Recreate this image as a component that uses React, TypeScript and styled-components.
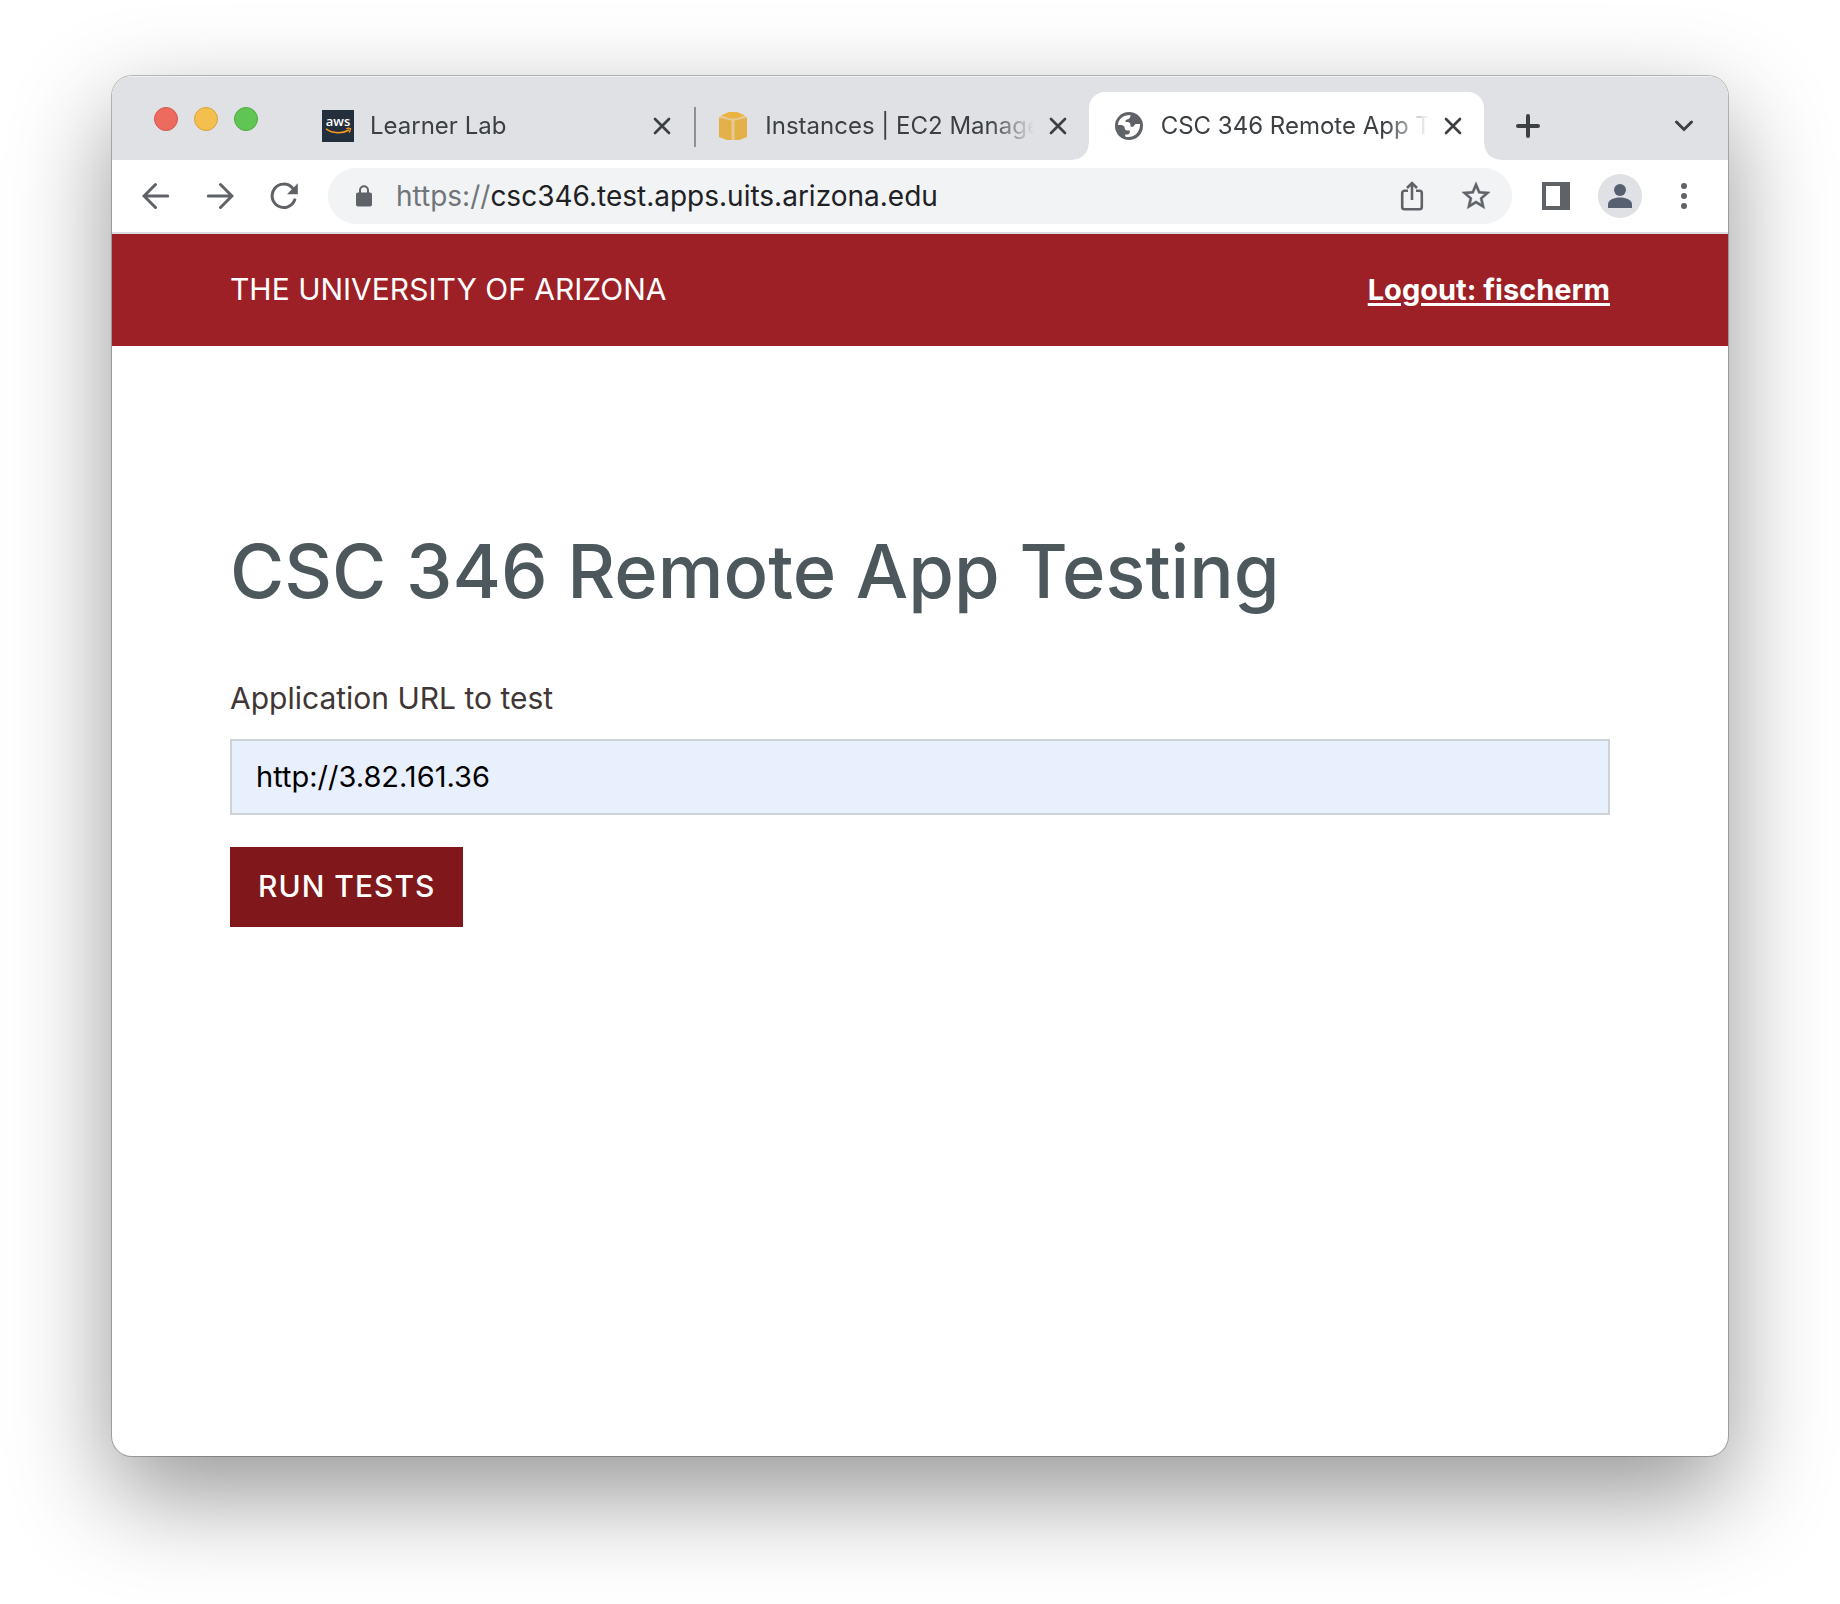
import React, { useState } from 'react';
import styled, { createGlobalStyle, css } from 'styled-components';

const color = {
  strip: '#dfe1e5',
  field: '#f1f3f4',
  icon: '#5f6368',
  ink: '#3c4043',
  red: '#9c2026',
  darkRed: '#7f171b',
};

const GlobalStyle = createGlobalStyle`
  *, *::before, *::after { box-sizing: border-box; }
  body { margin: 0; background: #fff; font-family: Inter, "Liberation Sans", sans-serif; }
  button, input { font: inherit; }
`;

const Desktop = styled.div`
  display: flex;
  min-height: 100vh;
  padding: 76px 112px 148px;
`;

const Window = styled.div`
  display: flex;
  flex-direction: column;
  flex: 1;
  min-width: 0;
  border-radius: 20px;
  overflow: hidden;
  background: #fff;
  box-shadow: 0 0 0 1px rgba(0, 0, 0, 0.24), 0 38px 100px rgba(0, 0, 0, 0.42);
`;

/* Tab strip */

const TabStrip = styled.div`
  display: flex;
  height: 84px;
  padding: 0 12px 0 42px;
  background: ${color.strip};
  box-shadow: inset 0 1px 0 #f1f2f4;
`;

const WindowControls = styled.div`
  display: flex;
  gap: 16px;
  padding-top: 31px;
  margin-right: 40px;
`;

const Light = styled.button<{ $fill: string; $edge: string }>`
  width: 24px;
  height: 24px;
  padding: 0;
  border: 1px solid ${(p) => p.$edge};
  border-radius: 50%;
  background: ${(p) => p.$fill};
`;

const Tabs = styled.div`
  display: flex;
  flex: 1;
  max-width: 1186px;
  min-width: 0;
  padding-top: 16px;
`;

const foot = css`
  content: '';
  position: absolute;
  bottom: 0;
  width: 16px;
  height: 16px;
`;

const Tab = styled.div<{ $active?: boolean; $divided?: boolean }>`
  position: relative;
  display: flex;
  align-items: center;
  flex: 1 1 0;
  min-width: 0;
  padding: 0 15px 0 24px;
  border-radius: 16px 16px 0 0;
  background: ${(p) => (p.$active ? '#fff' : 'transparent')};

  ${(p) =>
    p.$divided &&
    css`
      &::before {
        content: '';
        position: absolute;
        left: 1px;
        top: 15px;
        width: 2px;
        height: 40px;
        background: #8d9095;
      }
    `}

  ${(p) =>
    p.$active &&
    css`
      &::before {
        ${foot}
        left: -16px;
        background: radial-gradient(circle at 0 0, transparent 15px, #fff 16px);
      }
      &::after {
        ${foot}
        right: -16px;
        background: radial-gradient(circle at 100% 0, transparent 15px, #fff 16px);
      }
    `}
`;

const Favicon = styled.span`
  display: grid;
  place-items: center;
  flex: none;
  width: 32px;
  height: 32px;
  margin-right: 16px;
`;

const TabTitle = styled.span`
  flex: 1;
  min-width: 0;
  overflow: hidden;
  white-space: nowrap;
  font-size: 24px;
  line-height: 32px;
  color: ${color.ink};
  mask-image: linear-gradient(to left, transparent, #000 44px);
`;

const Plain = styled.button`
  display: grid;
  place-items: center;
  flex: none;
  padding: 0;
  border: 0;
  background: none;
`;

const CloseButton = styled(Plain)`
  width: 32px;
  height: 32px;
  margin-left: 8px;
`;

const StripButton = styled(Plain)`
  width: 64px;
  margin: 16px 0 0 12px;

  &:last-child {
    margin-left: auto;
  }
`;

/* Toolbar */

const Toolbar = styled.div`
  display: flex;
  align-items: center;
  height: 74px;
  padding: 0 12px;
  border-bottom: 2px solid #dadce0;
`;

const ToolButton = styled(Plain)`
  width: 64px;
  height: 56px;
`;

const Omnibox = styled.div`
  display: flex;
  align-items: center;
  flex: 1;
  min-width: 0;
  height: 56px;
  margin: 0 12px;
  padding: 0 4px 0 28px;
  border-radius: 28px;
  background: ${color.field};
  font-size: 28px;
  line-height: 40px;
`;

const Scheme = styled.label`
  margin-left: 24px;
  color: #70757a;
`;

const Address = styled.input`
  flex: 1;
  min-width: 0;
  height: 40px;
  padding: 0;
  border: 0;
  outline: 0;
  background: transparent;
  color: #202124;
`;

const Avatar = styled.span`
  display: grid;
  place-items: center;
  width: 44px;
  height: 44px;
  border-radius: 50%;
  background: ${color.strip};
`;

/* Page */

const Banner = styled.header`
  display: flex;
  align-items: center;
  justify-content: space-between;
  height: 112px;
  padding: 0 118px 2px;
  background: ${color.red};
  color: #fff;
  font-size: 30px;
`;

const LogoutLink = styled.a`
  color: inherit;
  font-size: 29px;
  font-weight: 700;
  text-decoration-thickness: 3px;
  text-underline-offset: 3px;
`;

const Main = styled.main`
  flex: 1;
  padding: 180px 118px 80px;
`;

const Heading = styled.h1`
  margin: 0 0 58px;
  font-size: 74px;
  font-weight: 500;
  line-height: 90px;
  color: #4c585c;
`;

const Form = styled.form`
  display: flex;
  flex-direction: column;
  align-items: flex-start;
`;

const Label = styled.label`
  margin-bottom: 17px;
  font-size: 30px;
  line-height: 48px;
  color: #403635;
`;

const UrlInput = styled.input`
  width: 100%;
  height: 76px;
  padding: 0 24px 2px;
  border: 2px solid #ccd2d8;
  border-radius: 0;
  background: #e8effd;
  color: #000;
  font-size: 29px;
`;

const RunButton = styled.button`
  height: 80px;
  margin-top: 32px;
  padding: 0 28px 2px;
  border: 0;
  background: ${color.darkRed};
  color: #fff;
  font-size: 30px;
  font-weight: 500;
  letter-spacing: 1px;
`;

/* Icons */

const AwsIcon = () => (
  <svg width="32" height="32" viewBox="0 0 32 32" aria-hidden="true">
    <rect width="32" height="32" fill="#242f3e" />
    <text x="16" y="16" textAnchor="middle" fill="#fff" fontFamily="Open Sans, sans-serif" fontWeight="600" fontSize="13">
      aws
    </text>
    <path d="M4.500 19.200c6 4.400 15.500 4.700 22 1" fill="none" stroke="#f59a1b" strokeWidth="1.600" strokeLinecap="round" />
    <path d="M24.300 18.600c1.600-.5 3-.5 4.200-.1 0 1.500-.5 2.900-1.500 4" fill="none" stroke="#f59a1b" strokeWidth="1.300" />
  </svg>
);

const BoxIcon = () => (
  <svg width="28" height="28" viewBox="0 0 28 28" aria-hidden="true">
    <path d="M0 5l8-4h12l8 4v20l-8 3H8l-8-3z" fill="#e3cb98" />
    <path d="M2 3.500L10 0h8l8 3.500L17 6.500h-6z" fill="#ebb440" />
    <path d="M0 5.500l12.500 3V28H8l-8-3zM28 5.500l-12.500 3V28H20l8-3z" fill="#e4b148" />
  </svg>
);

const GlobeIcon = () => (
  <svg width="28" height="28" viewBox="0 0 28 28" aria-hidden="true">
    <circle cx="14" cy="14" r="14" fill={color.icon} />
    <path
      d="M3 13C3.300 7 8 3 15.500 3c0 2.500-1 4.200-3.500 4.500-1.500.2-1.500 1-1.500 2.500h2c2 0 3 1.500 3 3.200v1.600h2c1.800 0 1.700-2.800 3.500-2.800h4c.3 7-4.500 13-11.500 13-1.300 0-2.300-.2-3.300-.6V22.500h2.300c1.300 0 2.300-1 2.300-2.700v-1.300h-2.300c-2.500 0-3-2-3-3.800L7 13z"
      fill="#fff"
    />
  </svg>
);

const CloseIcon = () => (
  <svg width="18" height="18" viewBox="0 0 18 18" fill="none" stroke={color.ink} strokeWidth="2.700" strokeLinecap="round" aria-hidden="true">
    <path d="M2 2l14 14M16 2L2 16" />
  </svg>
);

const PlusIcon = () => (
  <svg width="24" height="24" viewBox="0 0 24 24" fill="none" stroke={color.ink} strokeWidth="4" strokeLinecap="round" aria-hidden="true">
    <path d="M12 2v20M2 12h20" />
  </svg>
);

const ChevronIcon = () => (
  <svg width="20" height="12" viewBox="0 0 20 12" fill="none" stroke={color.ink} strokeWidth="3" strokeLinecap="round" aria-hidden="true">
    <path d="M2.500 2l7.500 7.500L17.500 2" />
  </svg>
);

const ArrowIcon = ({ forward }: { forward?: boolean }) => (
  <svg width="28" height="28" viewBox="0 0 28 28" fill="none" stroke={color.icon} strokeWidth="3" strokeLinecap="round" aria-hidden="true">
    {forward ? <path d="M2.300 14h23M14.500 2.500L26 14 14.500 25.500" /> : <path d="M25.700 14h-23M13.500 2.500L2 14l11.500 11.500" />}
  </svg>
);

const ReloadIcon = () => (
  <svg width="28" height="28" viewBox="0 0 28 28" aria-hidden="true">
    <path d="M24.800 17.800A11.700 11.700 0 1 1 22.500 6" fill="none" stroke={color.icon} strokeWidth="3" strokeLinecap="round" />
    <path d="M27.800 1.300v10.900H17z" fill={color.icon} />
  </svg>
);

const LockIcon = () => (
  <svg width="16" height="22" viewBox="0 0 16 22" aria-hidden="true">
    <rect y="7.500" width="16" height="14" rx="2" fill={color.icon} />
    <path d="M4 8V5.200a4 4 0 0 1 8 0V8" fill="none" stroke={color.icon} strokeWidth="2" />
  </svg>
);

const ShareIcon = () => (
  <svg width="24" height="30" viewBox="0 0 24 30" fill="none" stroke={color.icon} strokeWidth="2.600" aria-hidden="true">
    <path d="M8 9.700H4.500a2.300 2.300 0 0 0-2.300 2.300v14a2.300 2.300 0 0 0 2.300 2.300h15a2.300 2.300 0 0 0 2.300-2.300V12a2.300 2.300 0 0 0-2.300-2.300H16" />
    <path d="M12 19V2.500M7 7l5-5 5 5" />
  </svg>
);

const StarIcon = () => (
  <svg width="34" height="34" viewBox="0 0 24 24" fill={color.icon} stroke={color.icon} strokeWidth="0.300" aria-hidden="true">
    <path d="M22 9.240l-7.190-.62L12 2 9.190 8.630 2 9.240l5.460 4.730L5.820 21 12 17.270 18.180 21l-1.630-7.030L22 9.240zM12 15.400l-3.760 2.270 1-4.280-3.320-2.880 4.380-.38L12 6.100l1.710 4.040 4.380.38-3.320 2.880 1 4.280L12 15.400z" />
  </svg>
);

const PanelIcon = () => (
  <svg width="28" height="28" viewBox="0 0 28 28" aria-hidden="true">
    <path d="M0 0h28v28H0zM4 4v20h14V4z" fillRule="evenodd" fill={color.icon} />
  </svg>
);

const PersonIcon = () => (
  <svg width="24" height="26" viewBox="0 0 24 26" fill="#566070" aria-hidden="true">
    <circle cx="12" cy="7" r="6" />
    <path d="M0 25v-3.500C0 17 6 14.500 12 14.500S24 17 24 21.500V25z" />
  </svg>
);

const DotsIcon = () => (
  <svg width="6" height="26" viewBox="0 0 6 26" fill={color.icon} aria-hidden="true">
    <circle cx="3" cy="3" r="3" />
    <circle cx="3" cy="13" r="3" />
    <circle cx="3" cy="23" r="3" />
  </svg>
);

const tabs = [
  { title: 'Learner Lab', icon: <AwsIcon /> },
  { title: 'Instances | EC2 Management Console', icon: <BoxIcon />, divided: true },
  { title: 'CSC 346 Remote App Testing', icon: <GlobeIcon />, active: true },
];

export default function App() {
  const [address, setAddress] = useState('csc346.test.apps.uits.arizona.edu');
  const [url, setUrl] = useState('http://3.82.161.36');

  return (
    <>
      <GlobalStyle />
      <Desktop>
        <Window>
          <TabStrip>
            <WindowControls>
              <Light $fill="#ec6a5e" $edge="#d5564b" aria-label="Close window" />
              <Light $fill="#f4bf4f" $edge="#d9a33c" aria-label="Minimize window" />
              <Light $fill="#61c554" $edge="#4fa93f" aria-label="Zoom window" />
            </WindowControls>
            <Tabs>
              {tabs.map((tab) => (
                <Tab key={tab.title} $active={tab.active} $divided={tab.divided}>
                  <Favicon>{tab.icon}</Favicon>
                  <TabTitle>{tab.title}</TabTitle>
                  <CloseButton aria-label={`Close ${tab.title}`}>
                    <CloseIcon />
                  </CloseButton>
                </Tab>
              ))}
            </Tabs>
            <StripButton aria-label="New tab">
              <PlusIcon />
            </StripButton>
            <StripButton aria-label="Search tabs">
              <ChevronIcon />
            </StripButton>
          </TabStrip>

          <Toolbar>
            <ToolButton aria-label="Back">
              <ArrowIcon />
            </ToolButton>
            <ToolButton aria-label="Forward">
              <ArrowIcon forward />
            </ToolButton>
            <ToolButton aria-label="Reload">
              <ReloadIcon />
            </ToolButton>
            <Omnibox>
              <LockIcon />
              <Scheme htmlFor="address">https://</Scheme>
              <Address id="address" value={address} spellCheck={false} onChange={(e) => setAddress(e.target.value)} />
              <ToolButton aria-label="Share">
                <ShareIcon />
              </ToolButton>
              <ToolButton aria-label="Bookmark">
                <StarIcon />
              </ToolButton>
            </Omnibox>
            <ToolButton aria-label="Side panel">
              <PanelIcon />
            </ToolButton>
            <ToolButton aria-label="Profile">
              <Avatar>
                <PersonIcon />
              </Avatar>
            </ToolButton>
            <ToolButton aria-label="Menu">
              <DotsIcon />
            </ToolButton>
          </Toolbar>

          <Banner>
            <span>THE UNIVERSITY OF ARIZONA</span>
            <LogoutLink href="#logout">Logout: fischerm</LogoutLink>
          </Banner>
          <Main>
            <Heading>CSC 346 Remote App Testing</Heading>
            <Form onSubmit={(e) => e.preventDefault()}>
              <Label htmlFor="app-url">Application URL to test</Label>
              <UrlInput id="app-url" type="text" value={url} spellCheck={false} onChange={(e) => setUrl(e.target.value)} />
              <RunButton type="submit">RUN TESTS</RunButton>
            </Form>
          </Main>
        </Window>
      </Desktop>
    </>
  );
}
